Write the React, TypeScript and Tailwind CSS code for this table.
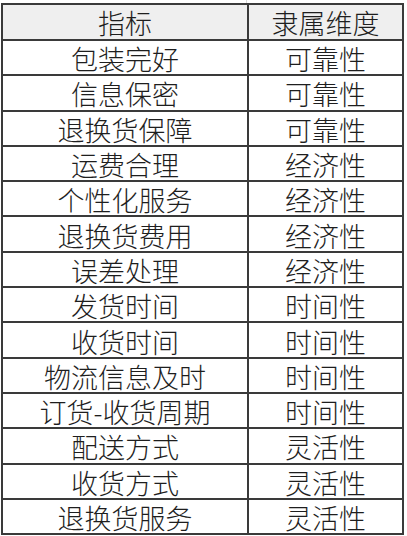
const rows: [string, string][] = [
  ["包装完好", "可靠性"],
  ["信息保密", "可靠性"],
  ["退换货保障", "可靠性"],
  ["运费合理", "经济性"],
  ["个性化服务", "经济性"],
  ["退换货费用", "经济性"],
  ["误差处理", "经济性"],
  ["发货时间", "时间性"],
  ["收货时间", "时间性"],
  ["物流信息及时", "时间性"],
  ["订货-收货周期", "时间性"],
  ["配送方式", "灵活性"],
  ["收货方式", "灵活性"],
  ["退换货服务", "灵活性"],
];

export default function App() {
  return (
    <div
      className="w-[407px] h-[536px] bg-white text-[#1e1e1e] overflow-hidden"
      style={{ fontFamily: '"Noto Sans CJK SC", "Noto Sans", sans-serif' }}
    >
      <div className="flex h-[3px]">
        <div className="w-[247px] border-r border-[#d8d8d8]" />
      </div>
      <table className="ml-[1px] w-[403px] border-collapse text-[27px] leading-none font-light">
        <thead>
          <tr className="h-[36px] bg-[#efefef]">
            <th className="w-[246px] border-2 border-[#3a3a3a] font-light text-center">指标</th>
            <th className="border-2 border-[#3a3a3a] font-light text-center">隶属维度</th>
          </tr>
        </thead>
        <tbody>
          {rows.map(([name, dim]) => (
            <tr key={name} className="h-[35.3px]">
              <td className="border-2 border-[#3a3a3a] text-center pt-[2px]">{name}</td>
              <td className="border-2 border-[#3a3a3a] text-center pt-[2px]">{dim}</td>
            </tr>
          ))}
        </tbody>
      </table>
    </div>
  );
}
